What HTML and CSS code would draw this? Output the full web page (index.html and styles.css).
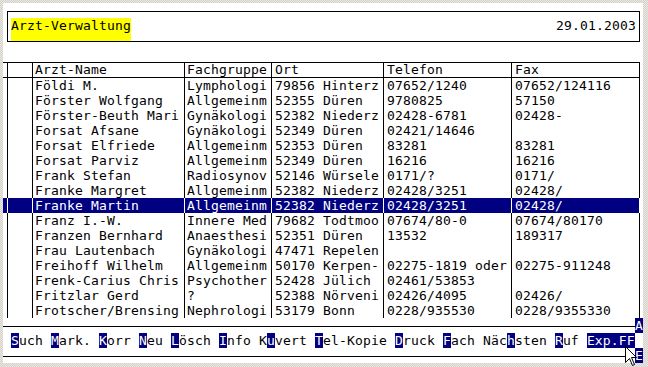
FILE: index.html
```html
<!DOCTYPE html>
<html lang="de">
<head>
<meta charset="utf-8">
<title>Arzt-Verwaltung</title>
<link rel="stylesheet" href="styles.css">
</head>
<body>
<div class="screen">
  <div class="titlebox">
    <span class="title">Arzt-Verwaltung</span>
    <span class="date">29.01.2003</span>
  </div>

  <div class="table">
    <div class="row head">
      <div class="c pre"></div><div class="c ind"></div>
      <div class="c name">Arzt-Name</div><div class="c fach">Fachgruppe</div>
      <div class="c ort">Ort</div><div class="c tel">Telefon</div><div class="c fax">Fax</div>
    </div>
    <div class="row"><div class="c pre"></div><div class="c ind"></div><div class="c name">Földi M.</div><div class="c fach">Lymphologi</div><div class="c ort">79856 Hinterz</div><div class="c tel">07652/1240</div><div class="c fax">07652/124116</div></div>
    <div class="row"><div class="c pre"></div><div class="c ind"></div><div class="c name">Förster Wolfgang</div><div class="c fach">Allgemeinm</div><div class="c ort">52355 Düren</div><div class="c tel">9780825</div><div class="c fax">57150</div></div>
    <div class="row"><div class="c pre"></div><div class="c ind"></div><div class="c name">Förster-Beuth Mari</div><div class="c fach">Gynäkologi</div><div class="c ort">52382 Niederz</div><div class="c tel">02428-6781</div><div class="c fax">02428-</div></div>
    <div class="row"><div class="c pre"></div><div class="c ind"></div><div class="c name">Forsat Afsane</div><div class="c fach">Gynäkologi</div><div class="c ort">52349 Düren</div><div class="c tel">02421/14646</div><div class="c fax"></div></div>
    <div class="row"><div class="c pre"></div><div class="c ind"></div><div class="c name">Forsat Elfriede</div><div class="c fach">Allgemeinm</div><div class="c ort">52353 Düren</div><div class="c tel">83281</div><div class="c fax">83281</div></div>
    <div class="row"><div class="c pre"></div><div class="c ind"></div><div class="c name">Forsat Parviz</div><div class="c fach">Allgemeinm</div><div class="c ort">52349 Düren</div><div class="c tel">16216</div><div class="c fax">16216</div></div>
    <div class="row"><div class="c pre"></div><div class="c ind"></div><div class="c name">Frank Stefan</div><div class="c fach">Radiosynov</div><div class="c ort">52146 Würsele</div><div class="c tel">0171/?</div><div class="c fax">0171/</div></div>
    <div class="row"><div class="c pre"></div><div class="c ind"></div><div class="c name">Franke Margret</div><div class="c fach">Allgemeinm</div><div class="c ort">52382 Niederz</div><div class="c tel">02428/3251</div><div class="c fax">02428/</div></div>
    <div class="row sel"><div class="c pre"></div><div class="c ind"></div><div class="c name">Franke Martin</div><div class="c fach">Allgemeinm</div><div class="c ort">52382 Niederz</div><div class="c tel">02428/3251</div><div class="c fax">02428/</div></div>
    <div class="row"><div class="c pre"></div><div class="c ind"></div><div class="c name">Franz I.-W.</div><div class="c fach">Innere Med</div><div class="c ort">79682 Todtmoo</div><div class="c tel">07674/80-0</div><div class="c fax">07674/80170</div></div>
    <div class="row"><div class="c pre"></div><div class="c ind"></div><div class="c name">Franzen Bernhard</div><div class="c fach">Anaesthesi</div><div class="c ort">52351 Düren</div><div class="c tel">13532</div><div class="c fax">189317</div></div>
    <div class="row"><div class="c pre"></div><div class="c ind"></div><div class="c name">Frau Lautenbach</div><div class="c fach">Gynäkologi</div><div class="c ort">47471 Repelen</div><div class="c tel"></div><div class="c fax"></div></div>
    <div class="row"><div class="c pre"></div><div class="c ind"></div><div class="c name">Freihoff Wilhelm</div><div class="c fach">Allgemeinm</div><div class="c ort">50170 Kerpen-</div><div class="c tel">02275-1819 oder</div><div class="c fax">02275-911248</div></div>
    <div class="row"><div class="c pre"></div><div class="c ind"></div><div class="c name">Frenk-Carius Chris</div><div class="c fach">Psychother</div><div class="c ort">52428 Jülich</div><div class="c tel">02461/53853</div><div class="c fax"></div></div>
    <div class="row"><div class="c pre"></div><div class="c ind"></div><div class="c name">Fritzlar Gerd</div><div class="c fach">?</div><div class="c ort">52388 Nörveni</div><div class="c tel">02426/4095</div><div class="c fax">02426/</div></div>
    <div class="row"><div class="c pre"></div><div class="c ind"></div><div class="c name">Frotscher/Brensing</div><div class="c fach">Nephrologi</div><div class="c ort">53179 Bonn</div><div class="c tel">0228/935530</div><div class="c fax">0228/9355330</div></div>
  </div>

  <div class="footer">
    <div class="footer-main">
      <div class="bar"><span class="hk">S</span>uch <span class="hk">M</span>ark. <span class="hk">K</span>orr <span class="hk">N</span>eu <span class="hk">L</span>ösch <span class="hk">I</span>nfo K<span class="hk">u</span>vert <span class="hk">T</span>el-Kopie <span class="hk">D</span>ruck <span class="hk">F</span>ach Näc<span class="hk">h</span>sten <span class="hk">R</span>uf <span class="hk">Exp.FF</span></div>
    </div>
    <div class="footer-side">
      <span class="ind-box">A</span>
      <span class="ind-box">E</span>
    </div>
  </div>

  <svg class="cursor" width="13" height="21" viewBox="0 0 13 21">
    <path d="M0.5 0.5 L0.5 16.5 L4.5 12.5 L7.5 19.5 L9.5 18.5 L6.5 11.5 L11.5 11.5 Z" fill="#fff" stroke="#000" stroke-width="1" stroke-linejoin="miter"/>
  </svg>
</div>
</body>
</html>
```

FILE: styles.css
```css
html, body {
  margin: 0;
  padding: 0;
}
body {
  width: 648px;
  height: 367px;
  overflow: hidden;
  background: repeating-conic-gradient(#d4d0c8 0 25%, #ebe9e5 0 50%) 0 0 / 2px 2px;
  font-family: "DejaVu Sans Mono", monospace;
  font-size: 13px;
  letter-spacing: 0.17px;
  color: #000;
}
.screen {
  position: relative;
  margin: 3px 0 0 3px;
  width: 640px;
  height: 360px;
  background: #fff;
}
.titlebox {
  box-sizing: border-box;
  margin: 0 0 0 4px;
  position: relative;
  top: 8px;
  width: 633px;
  height: 31px;
  border: 1px solid #000;
  padding: 6px 3px 0 3px;
  display: flex;
  justify-content: space-between;
  line-height: 15px;
  white-space: pre;
}
.title {
  background: #ffff00;
}
.table {
  margin-top: 28px;
  width: 637px;
}
.row {
  display: grid;
  grid-template-columns: 4px 25px 152px 87px 112px 128px 129px;
  height: 15px;
  line-height: 15px;
}
.row.head {
  box-sizing: border-box;
  height: 16px;
  line-height: 14px;
  border-top: 1px solid #000;
  border-bottom: 1px solid #000;
}
.c {
  box-sizing: border-box;
  border-left: 1px solid #000;
  white-space: pre;
  overflow: hidden;
}
.c.pre {
  border-left: 0;
}
.c.name, .c.fach {
  padding-left: 2px;
}
.c.ort, .c.tel, .c.fax {
  padding-left: 3px;
}
.c.fax {
  border-right: 1px solid #000;
}
.row.sel {
  background: #000080;
  color: #fff;
}
.row.sel .c {
  border-color: #fff;
}
.footer {
  display: flex;
  height: 45px;
}
.footer-main {
  width: 632px;
  padding-top: 8px;
}
.bar {
  box-sizing: border-box;
  height: 31px;
  border-top: 1px solid #000;
  border-bottom: 1px solid #000;
  padding: 6px 0 0 8px;
  line-height: 15px;
  white-space: pre;
}
.hk {
  background: #000080;
  color: #fff;
}
.footer-side {
  width: 8px;
  display: flex;
  flex-direction: column;
  justify-content: space-between;
}
.ind-box {
  display: block;
  height: 15px;
  line-height: 15px;
  background: #000080;
  color: #fff;
  text-align: center;
}
.cursor {
  position: absolute;
  left: 622px;
  top: 343px;
}
```
